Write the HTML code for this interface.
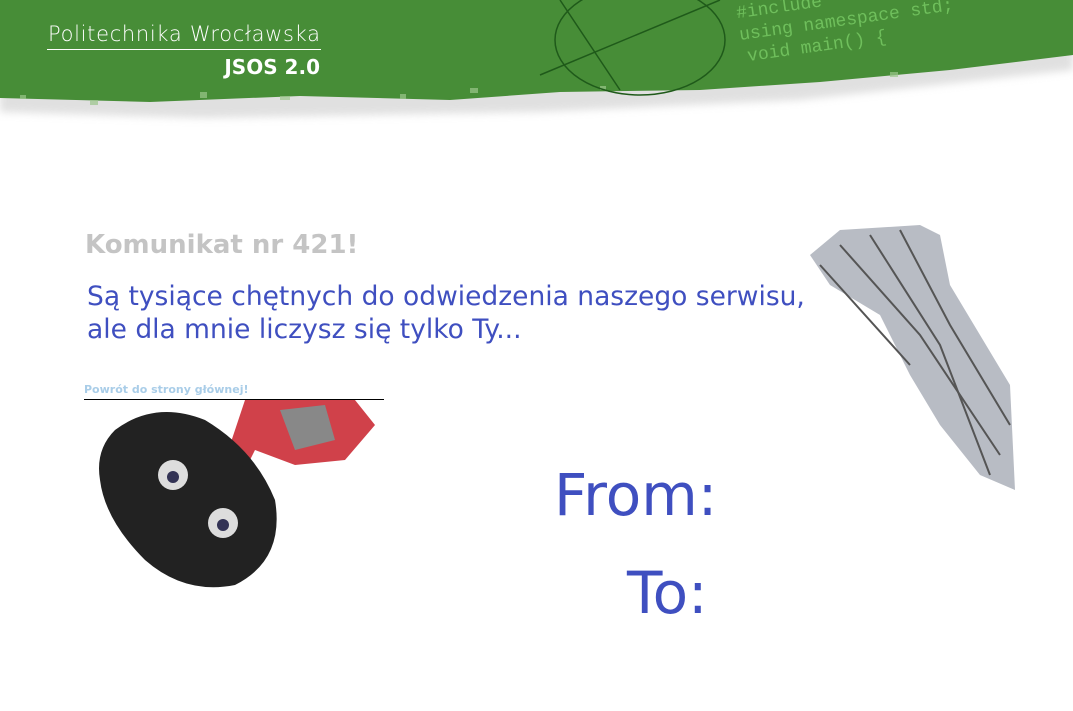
<!DOCTYPE html>
<html><head><meta charset="utf-8"><style>
body{margin:0;width:1073px;height:711px;background:#fff;overflow:hidden;position:relative;font-family:"Liberation Sans",sans-serif}
.a{position:absolute}
.msg{color:#3f4fc0;font-family:"DejaVu Sans",sans-serif;font-size:26.5px;line-height:33px}
</style></head><body>
<svg class="a" style="left:0;top:0" width="1073" height="130">
<defs><filter id="b"><feGaussianBlur stdDeviation="4"/></filter></defs>
<path d="M0,112 L200,118 L540,112 L800,100 L1073,70 L1073,0 L0,0Z" fill="#ccc" filter="url(#b)" opacity=".6"/>
<path d="M0,98 L150,102 L300,96 L450,100 L560,92 L700,90 L820,82 L950,70 L1073,55 L1073,0 L0,0Z" fill="#478d37"/>
<g fill="#9bc68c" opacity=".7">
<rect x="20" y="95" width="6" height="4"/><rect x="90" y="100" width="8" height="5"/><rect x="200" y="92" width="7" height="6"/><rect x="280" y="96" width="10" height="4"/><rect x="400" y="94" width="6" height="5"/><rect x="470" y="88" width="8" height="5"/><rect x="600" y="86" width="6" height="4"/><rect x="890" y="72" width="8" height="5"/></g>
<g fill="none" stroke="#1f5a1a" stroke-width="1.5"><ellipse cx="640" cy="40" rx="85" ry="55"/><line x1="540" y1="75" x2="720" y2="0"/><line x1="560" y1="0" x2="620" y2="90"/></g>
<g font-family="Liberation Mono,monospace" fill="#6fbf5c" font-size="18" transform="rotate(-8 740 40)"><text x="740" y="18">#include</text><text x="740" y="40">using namespace std;</text><text x="745" y="62">void main() {</text></g>
<text x="48" y="41" fill="#fff" font-family="DejaVu Sans,sans-serif" font-size="21" font-weight="300" textLength="272">Politechnika Wrocławska</text>
<rect x="47" y="49" width="274" height="1" fill="#fff"/>
<text x="320" y="74" text-anchor="end" fill="#fff" font-weight="bold" font-family="DejaVu Sans,sans-serif" font-size="20">JSOS 2.0</text>
</svg>
<div class="a" style="left:85px;top:230px;color:#c4c4c4;font-weight:bold;font-size:26px;font-family:'DejaVu Sans',sans-serif">Komunikat nr 421!</div>
<div class="a msg" style="left:87px;top:280px">Są tysiące chętnych do odwiedzenia naszego serwisu,<br>ale dla mnie liczysz się tylko Ty...</div>
<div class="a" style="left:84px;top:383px;color:#a9cde8;font-size:11px;font-weight:bold;font-family:'DejaVu Sans',sans-serif">Powrót do strony głównej!</div>
<div class="a" style="left:84px;top:399px;width:300px;height:1px;background:#000"></div>
<svg class="a" style="left:95px;top:400px" width="290" height="195">
<path d="M150,0 L260,0 L280,25 L250,60 L200,65 L160,50 L150,70 L130,60Z" fill="#c8202a" opacity=".85"/>
<path d="M185,10 L230,5 L240,40 L200,50Z" fill="#888"/>
<path d="M20,30 Q60,0 110,20 Q160,50 180,100 Q190,160 140,185 Q90,195 50,160 Q10,120 5,80 Q0,50 20,30Z" fill="#222"/>
<circle cx="78" cy="75" r="15" fill="#ddd"/><circle cx="78" cy="77" r="6" fill="#335"/>
<circle cx="128" cy="123" r="15" fill="#ddd"/><circle cx="128" cy="125" r="6" fill="#335"/>
</svg>
<svg class="a" style="left:800px;top:225px" width="215" height="270">
<path d="M10,30 L40,5 L120,0 L140,10 L150,60 L210,160 L215,265 L180,250 L140,200 L110,150 L80,90 L30,60Z" fill="#b8bcc4"/>
<g stroke="#555" stroke-width="2" fill="none"><path d="M40,20 L120,110 L200,230"/><path d="M70,10 L140,120 L190,250"/><path d="M100,5 L150,100 L210,200"/><path d="M20,40 L110,140"/></g>
</svg>
<div class="a" style="left:554px;top:461px;color:#3f4fc0;font-family:'DejaVu Sans',sans-serif;font-size:58px">From:</div>
<div class="a" style="left:627px;top:559px;color:#3f4fc0;font-family:'DejaVu Sans',sans-serif;font-size:58px">To:</div>
</body></html>
